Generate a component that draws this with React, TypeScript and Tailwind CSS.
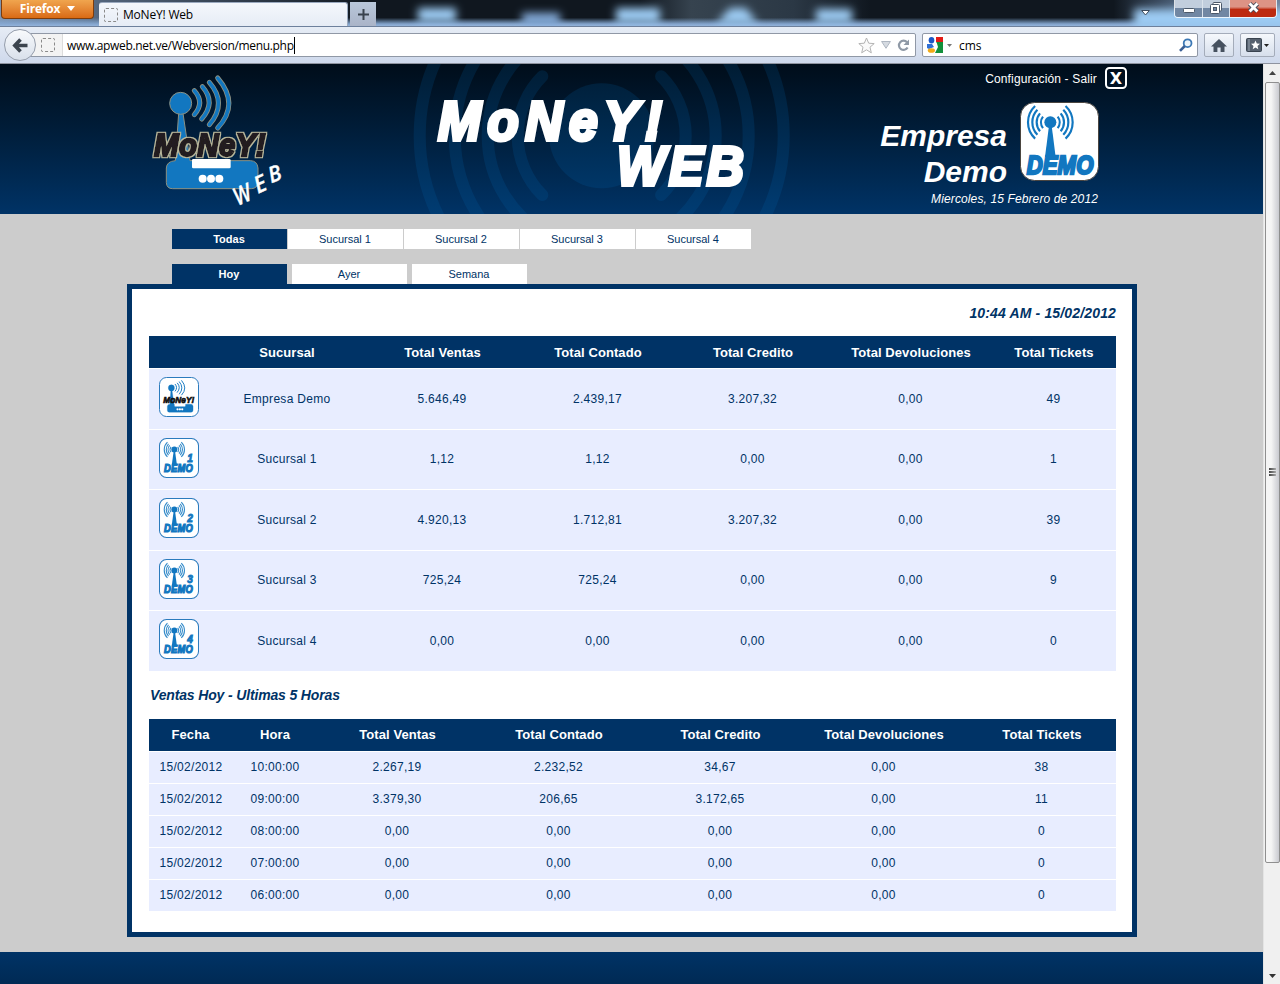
import React from "react";

const BLUE = "#1277c0";

function arc(cx: number, cy: number, r: number, deg: number, side: 1 | -1) {
  const a = (deg * Math.PI) / 180;
  const x = cx + side * r * Math.cos(a);
  const dy = r * Math.sin(a);
  return `M${x} ${cy - dy}A${r} ${r} 0 0 ${side === 1 ? 1 : 0} ${x} ${cy + dy}`;
}

type HeavyProps = {
  x: number;
  y: number;
  size: number;
  width: number;
  squeeze: number;
  fill: string;
  sw?: number;
  filter?: string;
  children: string;
};

function Heavy({ x, y, size, width, squeeze, fill, sw = 0, filter, children }: HeavyProps) {
  return (
    <text
      transform={`translate(${x} ${y}) scale(${squeeze} 1)`}
      fontFamily="'Liberation Sans', Arial, sans-serif"
      fontWeight={700}
      fontStyle="italic"
      fontSize={size}
      textLength={width / squeeze}
      lengthAdjust="spacing"
      fill={fill}
      stroke={fill}
      strokeWidth={sw}
      filter={filter}
    >
      {children}
    </text>
  );
}

function RouterArt({ glow }: { glow: boolean }) {
  const edge = glow ? "#8b9183" : BLUE;
  const waves = [
    "M163 80Q195 116 163 152",
    "M187 68Q229 116 185 165",
    "M208 55Q263 118 208 182",
    "M233 42Q300 120 233 192",
  ];
  return (
    <g>
      {glow &&
        waves.map((d) => (
          <path key={d} d={d} fill="none" stroke={edge} strokeWidth={15} strokeLinecap="round" />
        ))}
      {waves.map((d) => (
        <path key={d + "b"} d={d} fill="none" stroke={BLUE} strokeWidth={10} strokeLinecap="round" />
      ))}
      <path
        d="M116 148L106 290Q80 292 79 312V356Q80 374 98 374H334Q353 373 354 354V312Q352 291 332 290H150L129 148Z"
        fill={BLUE}
        stroke={edge}
        strokeWidth={3}
      />
      <circle cx={122} cy={118} r={33} fill={BLUE} stroke={edge} strokeWidth={3} />
      <rect x={156} y={285} width={116} height={28} rx={4} fill="#fff" />
      <circle cx={188} cy={344} r={12} fill="#fff" />
      <circle cx={213} cy={344} r={12} fill="#fff" />
      <circle cx={238} cy={344} r={12} fill="#fff" />
    </g>
  );
}

function MainLogo() {
  return (
    <svg className="h-[150px] w-[160px] shrink-0" viewBox="0 0 480 450">
      <defs>
        <filter id="halo" x="-10%" y="-20%" width="120%" height="140%">
          <feMorphology in="SourceAlpha" operator="dilate" radius="2" result="fat" />
          <feGaussianBlur in="fat" stdDeviation="2" result="blur" />
          <feFlood floodColor="#b9b79c" />
          <feComposite in2="blur" operator="in" result="tint" />
          <feMerge>
            <feMergeNode in="tint" />
            <feMergeNode in="SourceGraphic" />
          </feMerge>
        </filter>
      </defs>
      <RouterArt glow />
      <Heavy x={42} y={275} size={95} width={335} squeeze={0.93} fill="#231f20" sw={7} filter="url(#halo)">
        MoNeY!
      </Heavy>
      <g fontFamily="'Open Sans', sans-serif" fontStyle="italic" fontWeight={600} fill="#fff" stroke="#fff" strokeWidth={1}>
        <text transform="translate(293 426) rotate(-24) scale(.8 1)" fontSize={74}>W</text>
        <text transform="translate(354 389) rotate(-24) scale(.95 1)" fontSize={70}>E</text>
        <text transform="translate(394 358) rotate(-20) scale(.95 1)" fontSize={66}>B</text>
      </g>
    </svg>
  );
}

function SmallRouter() {
  return (
    <svg className="block size-10" viewBox="0 0 120 120">
      <rect x={1.5} y={1.5} width={117} height={117} rx={21} fill="#fff" stroke="#2b7bbd" strokeWidth={3} />
      <g transform="translate(3 -1) scale(.28 .285)">
        <RouterArt glow={false} />
      </g>
      <Heavy x={13} y={78} size={27} width={93} squeeze={0.92} fill="#111" sw={2}>
        MoNeY!
      </Heavy>
    </svg>
  );
}

function DemoIcon({ digit }: { digit?: string }) {
  const cy = digit ? 68 : 61;
  return (
    <svg className={digit ? "block size-10" : "block size-[79px]"} viewBox="0 0 237 237">
      <rect
        x={digit ? 3 : 1.5}
        y={digit ? 3 : 1.5}
        width={digit ? 231 : 234}
        height={digit ? 231 : 234}
        rx={42}
        fill="#fff"
        stroke={digit ? "#2b7bbd" : "#4a4540"}
        strokeWidth={digit ? 6 : 3}
      />
      {(digit ? [25, 37, 48, 60] : [28, 41, 54, 67]).map((r, i) => (
        <g key={r} fill="none" stroke={BLUE} strokeWidth={6.5} opacity={digit ? 0.85 : 1}>
          <path d={arc(91, cy, r, 38 + i * 3, 1)} />
          <path d={arc(91, cy, r, 38 + i * 3, -1)} />
        </g>
      ))}
      <circle cx={91} cy={cy} r={18} fill={BLUE} />
      <path d={`M87 ${cy + 10}H95L107 165H75Z`} fill={BLUE} />
      <Heavy x={digit ? 30 : 20} y={digit ? 200 : 216} size={digit ? 66 : 79} width={digit ? 170 : 200} squeeze={0.84} fill={BLUE} sw={7}>
        DEMO
      </Heavy>
      {digit && (
        <Heavy x={168} y={140} size={60} width={34} squeeze={1} fill={BLUE} sw={5}>
          {digit}
        </Heavy>
      )}
    </svg>
  );
}

function CenterBanner() {
  return (
    <svg className="ml-[100px] h-[150px] w-[400px] shrink-0" viewBox="0 0 400 150">
      <defs>
        <linearGradient id="wave" x1="0" y1="0" x2="0" y2="150" gradientUnits="userSpaceOnUse">
          <stop offset="0" stopColor="#001c33" />
          <stop offset="1" stopColor="#003c73" />
        </linearGradient>
      </defs>
      <g fill="none" stroke="url(#wave)" strokeWidth={12} strokeLinecap="round">
        {[84, 114, 147, 182].map((r, i) => (
          <g key={r}>
            <path d={arc(201.7, 71.7, r, i === 0 ? 45 : 60, 1)} />
            <path d={arc(201.7, 71.7, r, i === 0 ? 45 : 60, -1)} />
          </g>
        ))}
      </g>
      <circle cx={201.7} cy={71.7} r={52.5} fill="url(#wave)" />
      <Heavy x={38} y={76} size={56} width={224} squeeze={0.92} fill="#fff" sw={4}>
        MoNeY!
      </Heavy>
      <Heavy x={217} y={121} size={56} width={127} squeeze={0.92} fill="#fff" sw={4}>
        WEB
      </Heavy>
    </svg>
  );
}

function TitleBackdrop() {
  return (
    <svg className="absolute inset-0 h-[26px] w-full" viewBox="0 0 1280 26" preserveAspectRatio="none">
      <defs>
        <linearGradient id="glass" x1="0" y1="0" x2="0" y2="1">
          <stop offset="0" stopColor="#7fa6d0" stopOpacity="0" />
          <stop offset=".68" stopColor="#7fa6d0" stopOpacity="0" />
          <stop offset=".92" stopColor="#86a8d2" stopOpacity=".95" />
          <stop offset="1" stopColor="#93b3da" />
        </linearGradient>
        <linearGradient id="dark" x1="0" y1="0" x2="1" y2="0">
          <stop offset="0" stopColor="#7e94b0" />
          <stop offset=".08" stopColor="#53657c" />
          <stop offset=".29" stopColor="#10171f" />
          <stop offset=".5" stopColor="#10171f" />
          <stop offset=".54" stopColor="#36434f" />
          <stop offset=".62" stopColor="#2b3845" />
          <stop offset=".68" stopColor="#10171f" />
          <stop offset=".87" stopColor="#10171f" />
          <stop offset=".92" stopColor="#4c6079" />
          <stop offset="1" stopColor="#6f8299" />
        </linearGradient>
        <filter id="soft" x="-50%" y="-80%" width="200%" height="260%">
          <feGaussianBlur stdDeviation="4" />
        </filter>
      </defs>
      <rect width="1280" height="26" fill="url(#dark)" />
      <rect width="1280" height="26" fill="url(#glass)" />
      <g fill="#9ccbf3" filter="url(#soft)">
        <rect x="418" y="8" width="38" height="14" />
        <rect x="522" y="13" width="38" height="12" fill="#86aedd" />
        <rect x="616" y="8" width="44" height="15" />
        <path d="M716 24L730 8H746L758 24Z" />
        <rect x="816" y="9" width="36" height="14" />
        <rect x="1134" y="9" width="160" height="20" />
      </g>
    </svg>
  );
}

function Titlebar() {
  return (
    <div className="relative h-[26px] shrink-0 overflow-hidden">
      <TitleBackdrop />
      <div className="relative flex h-full items-start">
        <div className="ml-px flex h-[19px] w-[93px] items-center justify-center gap-[7px] rounded-b-[4px] border border-t-0 border-[#7d3c0c] bg-linear-to-b from-[#f0a54e] to-[#d96a12] pb-px text-[12px] leading-none font-bold tracking-[-0.2px] text-white">
          Firefox
          <svg className="h-[5px] w-[8px]" viewBox="0 0 8 5"><path d="M0 0H8L4 5Z" fill="#fff" /></svg>
        </div>
        <div className="mt-[2px] ml-[5px] flex h-6 w-[249px] items-center rounded-t-[3px] border-t border-r border-[#9aa9bf] bg-linear-to-b from-[#f4f7fc] to-[#e6ecf5] pl-[5px] text-[12px] text-black">
          <span className="mr-[5px] size-[14px] rounded-[2px] border border-dashed border-[#8a8a8a]" />
          <span className="tracking-[-0.2px]">MoNeY! Web</span>
        </div>
        <div className="mt-[2px] ml-[2px] flex h-6 w-[26px] items-center justify-center bg-linear-to-b from-[#b9c7da] to-[#aab4c8]">
          <svg className="size-[11px]" viewBox="0 0 11 11"><path d="M5.5 0V11M0 5.5H11" stroke="#39424d" strokeWidth="2" /></svg>
        </div>
        <svg className="mt-[10px] ml-[765px] h-[6px] w-[9px]" viewBox="0 0 9 6"><path d="M.7.5H8.3L4.5 5Z" fill="#fff" stroke="#3d4b5c" /></svg>
        <div className="ml-[24px] flex h-[18px] w-[103px] overflow-hidden rounded-b-[4px] border border-t-0 border-white/80">
          <div className="flex w-[28px] items-center justify-center border-r border-[#dbe3ec] bg-linear-to-b from-[#c2cedd] from-45% to-[#7187a3] to-50%">
            <svg className="mt-[3px] h-[5px] w-[12px]" viewBox="0 0 12 5"><rect x=".5" y=".5" width="11" height="4" rx="1" fill="#fff" stroke="#4b5869" /></svg>
          </div>
          <div className="flex w-[27px] items-center justify-center border-r border-[#dbe3ec] bg-linear-to-b from-[#c2cedd] from-45% to-[#7187a3] to-50%">
            <svg className="mb-[2px] size-[12px]" viewBox="0 0 12 12" fill="#fff" stroke="#4b5869"><rect x="3" y=".5" width="8.5" height="8.5" rx="1" /><rect x=".5" y="2.5" width="9" height="9" rx="1" /><rect x="3.5" y="5.5" width="3" height="3" fill="#7187a3" /></svg>
          </div>
          <div className="flex flex-1 items-center justify-center bg-linear-to-b from-[#dd9385] from-40% to-[#bd2a10] to-55%">
            <svg className="mb-[2px] h-[11px] w-[13px]" viewBox="0 0 12 10"><path d="M2.4 1.6L9.6 8.4M9.6 1.6L2.4 8.4" stroke="#4d4f5c" strokeWidth="4.4" /><path d="M2.4 1.4L9.6 8.6M9.6 1.4L2.4 8.6" stroke="#fff" strokeWidth="2.6" /></svg>
          </div>
        </div>
      </div>
    </div>
  );
}

function Toolbar() {
  return (
    <div className="flex h-[38px] shrink-0 items-center border-t border-b border-t-[#6d809c] border-b-[#8e939f] bg-linear-to-b from-[#e6ecf5] to-[#cfd9ec] text-[12px] text-black">
      <div className="relative z-10 ml-1 flex size-8 shrink-0 items-center justify-center rounded-full border border-[#959dab] bg-linear-to-b from-[#f8fafc] to-[#d9e0eb]">
        <svg className="h-[15px] w-[17px]" viewBox="0 0 17 15"><path d="M8.5 1.5L2.8 7.5L8.5 13.5M3 7.5H15.5" fill="none" stroke="#3c444e" strokeWidth="3.6" /></svg>
      </div>
      <div className="-ml-[6px] flex h-6 w-[886px] items-center rounded-r-[2px] border border-[#9098a6] bg-white">
        <div className="flex h-full w-[32px] items-center justify-end border-r border-[#dcdcdc] bg-[#f3f3f3] pr-[7px]">
          <span className="size-[14px] rounded-[2px] border border-dashed border-[#8a8a8a]" />
        </div>
        <span className="ml-[4px] border-r border-black pt-px leading-4 tracking-[-0.33px]">www.apweb.net.ve/Webversion/menu.php</span>
        <div className="ml-auto flex items-center gap-[6px] pr-[5px]">
          <svg className="size-[17px]" viewBox="0 0 17 17"><path d="M8.5 1L10.7 6.2L16.2 6.6L12 10.2L13.3 15.8L8.5 12.8L3.7 15.8L5 10.2L.8 6.6L6.3 6.2Z" fill="#fafafa" stroke="#b3b3b3" /></svg>
          <svg className="h-[8px] w-[10px]" viewBox="0 0 10 8"><path d="M.6.5H9.4L5 7.3Z" fill="#d5dae1" stroke="#aeb6c1" /></svg>
          <svg className="size-[13px]" viewBox="0 0 13 13"><path d="M10 3.2A4.6 4.6 0 1 0 10.6 8.5" fill="none" stroke="#8f99a6" strokeWidth="2.2" /><path d="M12 .5V6H6.5Z" fill="#8f99a6" /></svg>
        </div>
      </div>
      <div className="ml-[6px] flex h-6 w-[276px] items-center rounded-[2px] border border-[#9098a6] bg-white">
        <svg className="ml-[4px] size-4" viewBox="0 0 16 16">
          <rect x="5" width="11" height="16" fill="#1b9a3f" />
          <rect x="8" width="8" height="5" fill="#e31b16" />
          <path d="M5 0H9V5L13 8L9 16H5Z" fill="#fff" />
          <path d="M9.5 5H16V16H8L11 10Z" fill="#12903b" />
          <ellipse cx="4.5" cy="3.2" rx="2.8" ry="3.2" fill="#1c57c4" />
          <path d="M0 7L5 7L7 10L2 12L0 11Z" fill="#2f6fd4" />
          <ellipse cx="4.4" cy="13.5" rx="3.6" ry="2.3" fill="#f2ab16" />
        </svg>
        <svg className="mx-[4px] h-[3px] w-[5px]" viewBox="0 0 5 3"><path d="M0 0H5L2.5 3Z" fill="#777" /></svg>
        <span className="ml-[3px] pt-px">cms</span>
        <svg className="mr-[4px] ml-auto size-[14px]" viewBox="0 0 14 14"><circle cx="8.6" cy="5.2" r="3.9" fill="#eef5fb" stroke="#3b78b5" strokeWidth="1.8" /><path d="M5.8 8L1 12.8" stroke="#3a5f94" strokeWidth="2.6" /></svg>
      </div>
      <div className="ml-[6px] flex h-6 w-[30px] items-center justify-center rounded-[2px] border border-[#a4acba] bg-linear-to-b from-[#f5f8fc] to-[#d7dfec]">
        <svg className="h-[13px] w-[16px]" viewBox="0 0 16 13"><path d="M8 0L16 7.5H13.5V13H9.6V8.5H6.4V13H2.5V7.5H0Z" fill="#46515f" /></svg>
      </div>
      <div className="ml-[6px] flex h-6 w-[35px] items-center justify-center gap-[2px] rounded-[2px] border border-[#a4acba] bg-linear-to-b from-[#f5f8fc] to-[#d7dfec]">
        <svg className="h-[14px] w-[16px]" viewBox="0 0 16 14"><rect x=".5" y=".5" width="15" height="13" rx="1" fill="#55606e" stroke="#39434f" /><path d="M3 1V13" stroke="#9aa4b0" /><path d="M9.5 2.5L10.8 5.6L14 5.8L11.5 7.9L12.3 11.2L9.5 9.4L6.7 11.2L7.5 7.9L5 5.8L8.2 5.6Z" fill="#fff" /></svg>
        <svg className="h-[3px] w-[5px]" viewBox="0 0 5 3"><path d="M0 0H5L2.5 3Z" fill="#222" /></svg>
      </div>
    </div>
  );
}

function Header() {
  return (
    <header className="flex h-[150px] shrink-0 bg-linear-to-b from-[#000d1a] to-[#003366] pl-[140px] text-white">
      <MainLogo />
      <CenterBanner />
      <div className="flex w-[327px] flex-col items-end">
        <div className="mt-[3px] flex h-[22px] items-center text-[12px] tracking-[0.15px]">
          <span className="pt-px">Configuración - Salir</span>
          <svg className="ml-[8px] size-[22px]" viewBox="0 0 22 22">
            <rect x="1" y="1" width="20" height="20" rx="3.5" fill="none" stroke="#fff" strokeWidth="2" />
            <text x="11" y="16.6" textAnchor="middle" fontFamily="'DejaVu Sans', sans-serif" fontWeight="700" fontSize="16" fill="#fff">X</text>
          </svg>
        </div>
        <div className="mt-[13px] mr-[28px] flex h-[79px] items-start">
          <div className="mt-[16px] mr-[13px] text-right text-[30px] leading-9 font-bold italic">
            Empresa
            <br />
            Demo
          </div>
          <DemoIcon />
        </div>
        <div className="mt-[10px] mr-[29px] text-[12px] leading-4 tracking-[0.12px] italic">Miercoles, 15 Febrero de 2012</div>
      </div>
    </header>
  );
}

function Tab({ label, active = false }: { label: string; active?: boolean }) {
  return (
    <div
      className={
        active
          ? "flex h-5 w-[115px] items-center justify-center bg-[#003366] pr-px text-[11px] font-bold text-white"
          : "flex h-5 w-[115px] items-center justify-center bg-white pr-px text-[11px] text-[#003366]"
      }
    >
      {label}
    </div>
  );
}

const branches = [
  { name: "Empresa Demo", values: ["5.646,49", "2.439,17", "3.207,32", "0,00", "49"] },
  { name: "Sucursal 1", digit: "1", values: ["1,12", "1,12", "0,00", "0,00", "1"] },
  { name: "Sucursal 2", digit: "2", values: ["4.920,13", "1.712,81", "3.207,32", "0,00", "39"] },
  { name: "Sucursal 3", digit: "3", values: ["725,24", "725,24", "0,00", "0,00", "9"] },
  { name: "Sucursal 4", digit: "4", values: ["0,00", "0,00", "0,00", "0,00", "0"] },
];

const hours = [
  ["15/02/2012", "10:00:00", "2.267,19", "2.232,52", "34,67", "0,00", "38"],
  ["15/02/2012", "09:00:00", "3.379,30", "206,65", "3.172,65", "0,00", "11"],
  ["15/02/2012", "08:00:00", "0,00", "0,00", "0,00", "0,00", "0"],
  ["15/02/2012", "07:00:00", "0,00", "0,00", "0,00", "0,00", "0"],
  ["15/02/2012", "06:00:00", "0,00", "0,00", "0,00", "0,00", "0"],
];

const totals = ["Total Ventas", "Total Contado", "Total Credito", "Total Devoluciones", "Total Tickets"];
const headRow = "h-8 items-center bg-[#003366] text-center text-[13px] font-bold tracking-[0.08px] text-white";
const bodyRow = "items-center bg-[#e8edff] text-center text-[12px] tracking-[0.3px] text-[#003366]";

function BranchTable() {
  const cols = "grid grid-cols-[60px_156px_155px_156px_154px_162px_124px]";
  return (
    <div className="flex flex-col gap-px">
      <div className={`${cols} ${headRow} pt-[2px]`}>
        <span />
        <span>Sucursal</span>
        {totals.map((t) => (
          <span key={t}>{t}</span>
        ))}
      </div>
      {branches.map((b, i) => (
        <div key={b.name} className={`${cols} ${bodyRow} ${i % 2 ? "h-[59px]" : "h-[60px]"}`}>
          <div className="self-start pt-2 pl-[10px]">{b.digit ? <DemoIcon digit={b.digit} /> : <SmallRouter />}</div>
          <span className={i % 2 ? "pb-[2px]" : ""}>{b.name}</span>
          {b.values.map((v, j) => (
            <span key={j} className={i % 2 ? "pr-px pb-[2px]" : "pr-px"}>{v}</span>
          ))}
        </div>
      ))}
    </div>
  );
}

function HourTable() {
  const cols = "grid grid-cols-[83px_86px_159px_164px_159px_168px_148px]";
  return (
    <div className="flex flex-col gap-px">
      <div className={`${cols} ${headRow}`}>
        {["Fecha", "Hora", ...totals].map((t) => (
          <span key={t}>{t}</span>
        ))}
      </div>
      {hours.map((r) => (
        <div key={r[1]} className={`${cols} ${bodyRow} h-[31px] pb-[2px]`}>
          {r.map((v, j) => (
            <span key={j} className={j === 0 ? "pl-px" : j > 1 ? "pr-px" : ""}>{v}</span>
          ))}
        </div>
      ))}
    </div>
  );
}

function Scrollbar() {
  return (
    <div className="flex w-[17px] shrink-0 flex-col items-center border-l border-[#e4e4e4] bg-[#f0f0f0]">
      <svg className="mt-[7px] h-[4px] w-[7px] shrink-0" viewBox="0 0 7 4"><path d="M0 4H7L3.5 0Z" fill="#444" /></svg>
      <div className="mt-[7px] flex h-[781px] w-[15px] shrink-0 flex-col items-center justify-center gap-px rounded-[2px] border border-[#8f8f8f] bg-linear-to-r from-[#f5f5f5] from-40% to-[#c9cad0] pb-[2px]">
        <span className="h-[2px] w-[7px] bg-linear-to-r from-[#444] to-[#aaa]" />
        <span className="h-[2px] w-[7px] bg-linear-to-r from-[#444] to-[#aaa]" />
        <span className="h-[2px] w-[7px] bg-linear-to-r from-[#444] to-[#aaa]" />
      </div>
      <svg className="mt-auto mb-[6px] h-[4px] w-[7px] shrink-0" viewBox="0 0 7 4"><path d="M0 0H7L3.5 4Z" fill="#333" /></svg>
    </div>
  );
}

export default function App() {
  return (
    <div className="flex h-[984px] w-[1280px] flex-col overflow-hidden font-['Open_Sans',sans-serif]">
      <Titlebar />
      <Toolbar />
      <div className="flex min-h-0 flex-1">
        <div className="flex w-[1263px] flex-col bg-[#cccccc] font-['Liberation_Sans',Arial,sans-serif]">
          <Header />
          <nav className="mt-[15px] ml-[172px] flex gap-px">
            <Tab label="Todas" active />
            <Tab label="Sucursal 1" />
            <Tab label="Sucursal 2" />
            <Tab label="Sucursal 3" />
            <Tab label="Sucursal 4" />
          </nav>
          <nav className="mt-[15px] ml-[172px] flex gap-[5px]">
            <Tab label="Hoy" active />
            <Tab label="Ayer" />
            <Tab label="Semana" />
          </nav>
          <main className="ml-[127px] h-[653px] w-[1010px] shrink-0 border-[5px] border-[#003366] bg-white pr-4 pl-[17px] text-[#003366]">
            <div className="flex h-[47px] items-center justify-end pt-[2px] text-[14px] font-bold tracking-[0.15px] italic">
              10:44 AM - 15/02/2012
            </div>
            <BranchTable />
            <div className="flex h-12 items-center pl-px text-[14px] font-bold tracking-[-0.15px] italic">
              Ventas Hoy - Ultimas 5 Horas
            </div>
            <HourTable />
          </main>
          <footer className="mt-[15px] flex-1 bg-linear-to-b from-[#003366] to-[#002a54]" />
        </div>
        <Scrollbar />
      </div>
    </div>
  );
}
